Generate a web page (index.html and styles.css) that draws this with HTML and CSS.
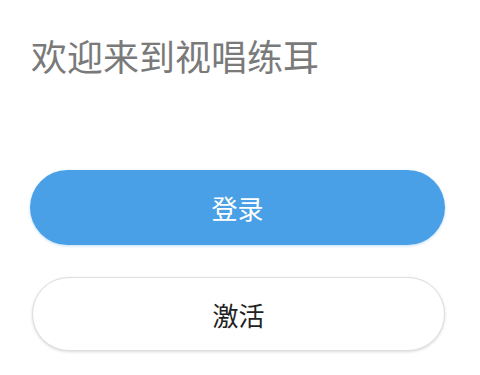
FILE: index.html
```html
<!DOCTYPE html>
<html lang="zh">
<head>
<meta charset="utf-8">
<link rel="stylesheet" href="styles.css">
</head>
<body>
<div class="page">
  <h1 class="title">欢迎来到视唱练耳</h1>
  <div class="actions">
    <button class="btn btn-primary">登录</button>
    <button class="btn btn-secondary">激活</button>
  </div>
</div>
</body>
</html>
```
FILE: styles.css
```css
html, body {
  margin: 0;
  padding: 0;
  background: #ffffff;
}
body {
  font-family: "Noto Sans CJK SC", "Noto Sans", sans-serif;
  width: 480px;
  height: 375px;
  overflow: hidden;
}
.page {
  padding: 37px 35px 0 30px;
}
.title {
  margin: 0 0 0 1px;
  font-size: 36px;
  line-height: 1;
  font-weight: 400;
  color: #7a7a7a;
}
.actions {
  margin-top: 97px;
  display: flex;
  flex-direction: column;
  gap: 32px;
}
.btn {
  box-sizing: border-box;
  width: 100%;
  height: 75px;
  border-radius: 38px;
  font-family: inherit;
  font-size: 26px;
  padding: 0;
  cursor: pointer;
}
.btn-primary {
  background: #4aa0e6;
  color: #ffffff;
  border: none;
  box-shadow: 0 1px 3px rgba(74, 160, 230, 0.35);
}
.btn-secondary {
  background: #ffffff;
  color: #222222;
  border: 1px solid #dedede;
  box-shadow: 0 1px 3px rgba(0, 0, 0, 0.15);
  height: 74px;
  margin-left: 2px;
  width: calc(100% - 2px);
}
```
